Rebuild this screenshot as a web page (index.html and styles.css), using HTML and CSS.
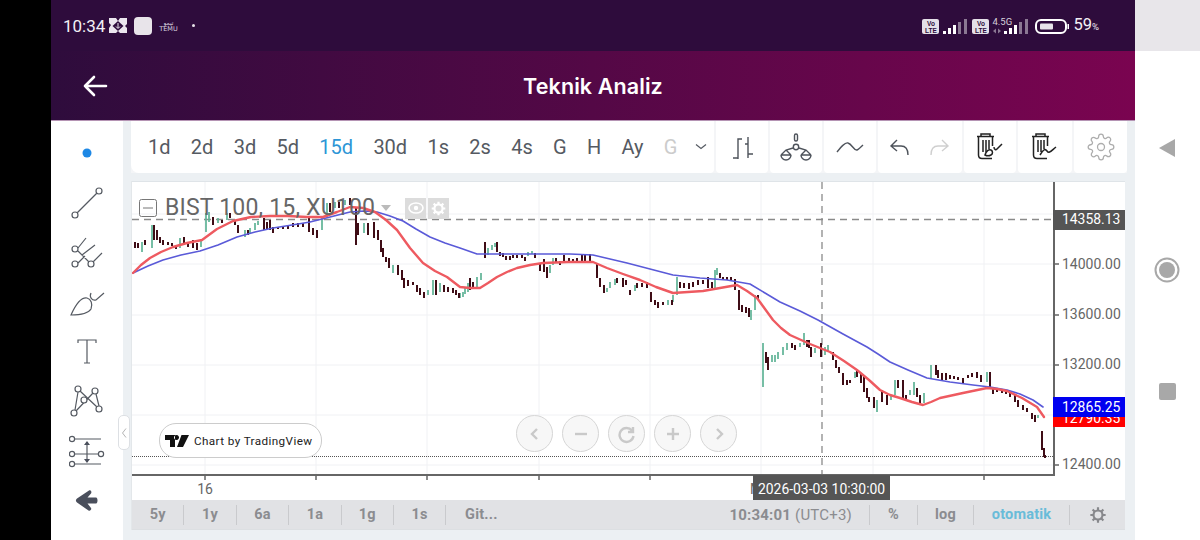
FILE: index.html
```html
<!DOCTYPE html>
<html lang="tr">
<head>
<meta charset="utf-8">
<title>Teknik Analiz</title>
<link rel="stylesheet" href="styles.css">
</head>
<body>
<svg class="defs" width="0" height="0" aria-hidden="true">
  <symbol id="cog" viewBox="0 0 24 24"><path d="M19.4 15a1.65 1.65 0 0 0 .33 1.82l.06.06a2 2 0 0 1 0 2.83 2 2 0 0 1-2.83 0l-.06-.06a1.65 1.65 0 0 0-1.82-.33 1.65 1.65 0 0 0-1 1.51V21a2 2 0 0 1-2 2 2 2 0 0 1-2-2v-.09A1.65 1.65 0 0 0 9 19.4a1.65 1.65 0 0 0-1.82.33l-.06.06a2 2 0 0 1-2.83 0 2 2 0 0 1 0-2.83l.06-.06a1.65 1.65 0 0 0 .33-1.82 1.65 1.65 0 0 0-1.51-1H3a2 2 0 0 1-2-2 2 2 0 0 1 2-2h.09A1.65 1.65 0 0 0 4.6 9a1.65 1.65 0 0 0-.33-1.82l-.06-.06a2 2 0 0 1 0-2.83 2 2 0 0 1 2.83 0l.06.06a1.65 1.65 0 0 0 1.82.33H9a1.65 1.65 0 0 0 1-1.51V3a2 2 0 0 1 2-2 2 2 0 0 1 2 2v.09a1.65 1.65 0 0 0 1 1.51 1.65 1.65 0 0 0 1.82-.33l.06-.06a2 2 0 0 1 2.83 0 2 2 0 0 1 0 2.83l-.06.06a1.65 1.65 0 0 0-.33 1.82V9a1.65 1.65 0 0 0 1.51 1H21a2 2 0 0 1 2 2 2 2 0 0 1-2 2h-.09a1.65 1.65 0 0 0-1.51 1z"/><circle cx="12" cy="12" r="3"/></symbol>
</svg>
<div class="screen">
  <div class="bezel"></div>
  <div class="app">
    <div class="status">
      <div class="status-left">
        <span class="clock">10:34</span>
        <svg class="st-diamond" viewBox="0 0 18 17"><path d="M0 1h7l2 3 2-3h7v6l-2 2 2 2v5h-7l-2-2-2 2H0v-5l2-3-2-2z" fill="#ebe6ee"/><path d="M9 4l5.500 5L9 14 3.500 9z" fill="#2e0c3c"/><path d="M9 6v5M7 9.500L9 11.500l2-2" stroke="#ebe6ee" fill="none"/></svg>
        <span class="st-square"></span>
        <span class="st-temu"><span class="st-temu-top">تيمو</span><span>TEMU</span></span>
        <span class="st-dot"></span>
      </div>
      <div class="status-right">
        <span class="volte">Vo<br>LTE</span>
        <svg class="bars" viewBox="0 0 24 15"><g fill="#fff"><rect x="0" y="12" width="3" height="3"/><rect x="5" y="9" width="3" height="6"/><rect x="10" y="6" width="3" height="9"/></g><g fill="#8b7893"><rect x="15" y="3" width="3" height="12"/><rect x="21" y="0" width="3" height="15"/></g></svg>
        <span class="volte">Vo<br>LTE</span>
        <span class="net">
          <span class="net-label">4.5G</span>
          <svg class="net-bars" viewBox="0 0 36 15"><path d="M1 12l3-2.500v5zM9 12L6 9.500v5z" fill="#8b7893"/><g fill="#fff"><rect x="12" y="12" width="3" height="3"/><rect x="17" y="9" width="3" height="6"/><rect x="22" y="6" width="3" height="9"/></g><g fill="#8b7893"><rect x="27" y="3" width="3" height="12"/><rect x="33" y="0" width="3" height="15"/></g></svg>
        </span>
        <svg class="battery" viewBox="0 0 34 15"><rect x="1" y="1" width="30" height="13" rx="5" fill="none" stroke="#fff" stroke-width="2"/><rect x="5" y="4.500" width="13" height="6" rx="1" fill="#e8e4ea"/><rect x="32.500" y="5" width="1.500" height="5" fill="#fff"/></svg>
        <span class="pct">59<small>%</small></span>
      </div>
    </div>
    <div class="header">
      <svg class="back" viewBox="0 0 26 24"><path d="M24 12H3M12 3l-9 9 9 9" fill="none" stroke="#fff" stroke-width="2.600" stroke-linecap="round" stroke-linejoin="round"/></svg>
      <h1 class="title">Teknik Analiz</h1>
    </div>
    <div class="main">
      <div class="tools">
        <svg class="tool" viewBox="69 135 36 36"><circle cx="87" cy="153" r="4.500" fill="#1e88e5"/></svg>
        <svg class="tool" viewBox="69 185 36 36"><path d="M77 213L97 193"/><circle cx="75" cy="215" r="3"/><circle cx="99" cy="191" r="3"/></svg>
        <svg class="tool" viewBox="69 235 36 36"><path d="M78 248L86 238M82 255L95 245M93 262L102 253M78 251L90 263M78 263L85 256"/><circle cx="75" cy="249" r="3"/><circle cx="75" cy="264" r="3"/><circle cx="91" cy="264" r="3"/></svg>
        <svg class="tool" viewBox="70 285 36 36"><path d="M72 315C76 306 82 297 88 298C92 299 94 304 92 309C89 314 80 315 72 315Z"/><path d="M92 293C90 297 93 301 97 300L105 293"/></svg>
        <svg class="tool" viewBox="70 335 36 36"><path d="M79 343V340H97V343M88 340V363M85 363H91"/></svg>
        <svg class="tool" viewBox="70 385 36 36"><path d="M76 410L79 392M77 411L94 393M81 391L98 407M97 394L100 406"/><circle cx="79" cy="389" r="3"/><circle cx="96" cy="391" r="3"/><circle cx="85" cy="400" r="3"/><circle cx="100" cy="409" r="3"/><circle cx="75" cy="413" r="3"/></svg>
        <svg class="tool" viewBox="70 435 36 36"><path d="M76 439H102M76 454H99M76 464H102M88 442V462"/><path class="solid" d="M88 441l-3 4h6zM88 463l-3-4h6z"/><circle cx="73" cy="439" r="2.600"/><circle cx="73" cy="454" r="2.600"/><circle cx="102" cy="454" r="2.600"/><circle cx="73" cy="464" r="2.600"/></svg>
        <svg class="tool" viewBox="70 485 36 36"><path class="solid" d="M78 498.500L90 490.500C92 489.500 93 492 92 493.500L88.500 497.500H97C99 497.500 99 503.500 97 503.500H88.500L92 508C93 509.500 91 511.500 89.500 510.500L78 502.500C76.500 501.500 76.500 499.500 78 498.500Z"/></svg>
      </div>
      <button class="collapse"><svg viewBox="0 0 6 12"><path d="M5 1.500L1.500 6 5 10.500" fill="none" stroke="#b5b5b5"/></svg></button>
      <div class="content">
        <div class="toolbar">
          <div class="card periods">
            <span class="period">1d</span><span class="period">2d</span><span class="period">3d</span><span class="period">5d</span><span class="period active">15d</span><span class="period">30d</span><span class="period">1s</span><span class="period">2s</span><span class="period">4s</span><span class="period">G</span><span class="period">H</span><span class="period">Ay</span><span class="period muted">G</span>
            <svg class="chev" viewBox="0 0 12 8"><path d="M1 1.500l5 4 5-4" fill="none" stroke="#555a62" stroke-width="1.200"/></svg>
          </div>
          <div class="card w52"><svg class="tb" viewBox="728 132 28 28"><path d="M742 138H738V158M738 157H733M748 136V157M745 143H748M748 153H753"/></svg></div>
          <div class="card w52"><svg class="tb scale" viewBox="780 131 30 30"><rect x="793.500" y="133" width="3" height="7" rx="1.500"/><circle cx="795" cy="146" r="2.700"/><path d="M792 147L785 149L780 154M798 147L805 149L810 154M785 149L790 154M805 149L800 154M780 154H790M800 154H810M780 154A5 5 0 0 0 790 154M800 154A5 5 0 0 0 810 154"/></svg></div>
          <div class="card w52"><svg class="tb" viewBox="836 134 28 28"><path d="M837 153C841 148 845 143 848 144C852 145 854 152 857 151C859 150 861 148 863 146"/></svg></div>
          <div class="card undo">
            <svg class="tb" viewBox="886 132 28 28"><path d="M897 139L891 145L897 150M891 145H901C906 145 908 149 908 154"/></svg>
            <svg class="tb light" viewBox="926 132 28 28"><path d="M942 139L948 145L942 150M948 145H938C933 145 931 149 931 154"/></svg>
          </div>
          <div class="card w52"><svg class="tb dark" viewBox="974 131 32 32"><path d="M977 136.500H994M981 136V134H990V136M978.500 137V155C978.500 157 979.500 158.500 982 158.500H992M992.500 137V146M983 140V152M986 140V152M989 140V149"/><path d="M985 155C986 151 989 149 991 150C993 151 993 154 991 155C989 156 987 156 985 155ZM994 147C994 150 996 150 997 149L1002 144"/></svg></div>
          <div class="card w54"><svg class="tb dark" viewBox="1029 131 32 32"><path d="M1032 136.500H1049M1036 136V134H1045V136M1033.500 137V155C1033.500 157 1034.500 158.500 1037 158.500H1047M1047.500 137V146M1038 140V152M1041 140V152M1044 140V149M1040 155C1043 150 1045 148 1047 151C1049 154 1051 151 1056 147"/></svg></div>
          <div class="card w53"><svg class="gear"><use href="#cog"/></svg></div>
        </div>
        <div class="chart">
          <svg class="plot" viewBox="132 182 993 318">
            <path class="grid" d="M205 182V475M316 182V475M427 182V475M539 182V475M650 182V475M761 182V475M873 182V475M984 182V475M132 214H1054M132 264H1054M132 315H1054M132 365H1054M132 415H1054M132 465H1054"/>
            <path class="dotted" d="M132 456.500H1054"/>
            <path class="cross" d="M132 219.500H1054M822 182V475"/>
            <path class="up" d="M142 242V252M152 225V248M180 238V248M201 240V247M206 213V232M209 212V222M218 218V223M227 213V220M245 230V237M250 228V234M255 223V230M258 221V225M322 217V230M327 203V217M335 202V208M345 200V205M364 223V233M393 265V273M428 290V295M433 280V295M440 283V292M463 292V297M468 283V292M460 293V298M465 288V294M477 277V287M481 273V280M488 248V255M492 245V250M495 243V247M528 252V256M532 251V254M550 265V273M553 258V265M607 288V292M610 282V288M615 279V285M635 285V291M668 300V305M673 295V302M677 277V295M715 270V288M717 268V275M751 310V320M755 295V310M763 343V387M772 355V362M775 355V362M778 352V359M783 347V355M787 343V350M800 343V347M804 333V345M815 348V353M825 347V355M828 345V352M855 372V378M877 400V412M891 395V400M895 380V395M910 390V395M914 382V395M924 393V403M931 365V378M987 372V382M1038 415V418"/>
            <path class="down" d="M135 242V248M138 243V248M145 240V245M154 225V240M157 230V240M160 237V243M163 240V245M168 242V245M172 243V246M176 245V249M184 237V245M188 242V247M193 240V248M197 243V250M213 217V225M222 220V223M230 213V218M235 220V225M238 225V233M248 230V235M264 218V230M267 222V230M270 220V230M273 227V233M278 227V229M283 226V229M288 225V229M293 223V227M298 223V227M303 223V227M309 217V232M313 228V235M317 230V238M330 203V212M339 202V208M350 198V205M356 207V245M358 223V235M368 223V235M374 222V238M378 230V240M381 240V252M383 248V257M386 257V262M389 258V268M398 265V275M402 270V280M404 278V288M408 280V286M413 282V285M417 285V292M420 288V295M424 292V298M436 280V295M444 285V292M448 287V292M453 288V293M456 290V295M459 293V298M470 278V290M473 282V288M485 242V258M497 242V252M500 252V256M503 253V257M506 256V260M510 256V260M513 255V258M517 255V258M522 255V258M525 257V261M535 253V258M540 263V271M544 259V272M547 267V278M556 258V263M560 261V265M564 255V262M569 258V263M573 259V263M577 258V263M582 255V263M585 255V263M590 254V262M597 263V278M600 278V287M604 285V293M617 278V283M623 278V287M626 280V285M630 290V295M637 283V288M642 283V287M647 282V288M651 292V302M655 300V305M658 302V308M663 302V305M672 300V305M680 282V288M684 283V288M689 283V289M693 282V287M698 280V285M703 280V284M708 277V288M712 282V288M720 273V278M723 277V280M727 277V280M731 277V280M735 279V290M739 290V310M742 305V312M746 307V313M749 308V317M758 295V300M766 352V363M768 357V370M792 343V348M795 345V350M807 340V347M809 340V348M811 347V357M821 343V357M833 352V360M836 360V368M839 367V373M843 373V385M847 380V385M850 380V383M857 370V377M861 373V383M864 375V392M867 388V398M869 397V402M874 397V408M882 390V402M887 395V405M898 380V388M903 380V398M906 395V400M917 388V397M920 395V405M936 365V375M938 370V378M942 373V380M946 373V380M950 375V379M954 376V379M958 377V380M963 378V383M968 375V378M972 373V377M977 372V378M981 375V382M990 372V387M993 387V394M997 388V392M1002 389V393M1006 390V394M1010 392V397M1015 395V402M1018 400V407M1023 405V410M1027 408V412M1032 413V419M1035 415V422M1042 431V450M1044 448V457M1045 455V458"/>
            <polyline class="ma blue" points="133,273 148,266 163,260 181,255 200,251 218,245 237,237 255,232 273,228 292,225 310,222 330,217 350,212 364,211 377,212 390,216 403,221 416,229 430,237 445,243 460,248 477,254 510,254 543,254 570,254 593,255 610,259 627,263 650,269 673,275 700,278 727,280 750,284 765,293 780,302 800,311 818,320 843,334 867,347 878,354 890,362 908,370 927,378 950,382 973,385 990,387 1007,390 1020,394 1033,400 1043,407"/>
            <polyline class="ma red" points="133,273 141,265 150,258 161,252 173,247 187,243 202,240 217,229 233,221 251,217 270,216 288,216 307,217 323,217 337,212 350,207 363,208 375,212 386,220 397,230 410,248 423,263 435,271 447,277 460,287 470,288 480,288 488,283 497,277 507,272 517,268 530,265 543,263 568,262 593,262 600,265 607,268 623,274 640,280 656,287 673,293 688,292 703,291 720,288 737,285 747,291 757,298 765,309 773,320 781,328 790,335 810,344 830,352 844,361 857,370 869,380 880,390 890,395 900,398 912,402 923,405 931,402 940,398 963,393 987,388 997,389 1007,391 1022,398 1037,407 1044,417"/>
            <path class="axis" d="M132 475H1055M1054 182V475"/>
            <path class="ticks" d="M205 475V480M316 475V480M427 475V480M539 475V480M650 475V480M761 475V480M873 475V480M984 475V480M1054 264H1059M1054 315H1059M1054 365H1059M1054 415H1059M1054 465H1059"/>
            <g class="prices">
              <text x="1062" y="269">14000.00</text>
              <text x="1062" y="319">13600.00</text>
              <text x="1062" y="369">13200.00</text>
              <text x="1062" y="469">12400.00</text>
            </g>
            <rect x="1053" y="210" width="72" height="20" fill="#555"/>
            <text class="tag" x="1062" y="224">14358.13</text>
            <rect x="1053" y="407" width="72" height="20" fill="#ff0000"/>
            <text class="tag" x="1062" y="423">12790.35</text>
            <rect x="1053" y="397" width="72" height="20" fill="#0000f0"/>
            <text class="tag" x="1062" y="412">12865.25</text>
            <text class="date" x="205" y="494" text-anchor="middle">16</text>
            <text class="date" x="750" y="494">M</text>
            <rect x="753" y="475" width="137" height="25" fill="#555"/>
            <text class="tag" x="758" y="494">2026-03-03 10:30:00</text>
          </svg>
          <div class="legend">
            <svg class="legend-box" viewBox="0 0 18 18"><rect x=".5" y=".5" width="17" height="17" rx="2" fill="none" stroke="#777"/><path d="M4 9h10" stroke="#777"/></svg>
            <span class="legend-text">BIST 100, 15, XU100</span>
            <span class="legend-caret"></span>
            <span class="legend-btn"><svg viewBox="0 0 16 12"><ellipse cx="8" cy="6" rx="7" ry="5" fill="none" stroke="#fff" stroke-width="1.600"/><circle cx="8" cy="6" r="2.200" fill="#fff"/></svg></span>
            <span class="legend-btn"><svg class="legend-cog" viewBox="0 0 20 20"><circle cx="10" cy="10" r="4.800" fill="none" stroke="#fff" stroke-width="2.600"/><path d="M10 2v3.500M10 14.500V18M2 10h3.500M14.500 10H18M4.300 4.300l2.500 2.500M13.200 13.200l2.500 2.500M15.700 4.300l-2.500 2.500M6.800 13.200l-2.500 2.500" stroke="#fff" stroke-width="2.600"/></svg></span>
          </div>
          <div class="tv">
            <svg class="tv-logo" viewBox="0 0 24 12"><path d="M0 0H10V12H5V5H0zM16.500 0H24L18 12H12z M11.500 0a2.500 2.500 0 1 0 .01 0z" fill="#111"/></svg>
            <span>Chart by TradingView</span>
          </div>
          <div class="zoom">
            <span class="zbtn"><svg viewBox="0 0 20 20"><path d="M12 5l-5 5 5 5"/></svg></span>
            <span class="zbtn"><svg viewBox="0 0 20 20"><path d="M4 10h12"/></svg></span>
            <span class="zbtn"><svg viewBox="0 0 20 20"><path d="M15 6.500A7 7 0 1 0 16.500 12M16 3v5h-5"/></svg></span>
            <span class="zbtn"><svg viewBox="0 0 20 20"><path d="M4 10h12M10 4v12"/></svg></span>
            <span class="zbtn"><svg viewBox="0 0 20 20"><path d="M8 5l5 5-5 5"/></svg></span>
          </div>
          <div class="bottom">
            <div class="ranges">
              <span class="range">5y</span><span class="range">1y</span><span class="range">6a</span><span class="range">1a</span><span class="range">1g</span><span class="range">1s</span><span class="range last">Git...</span>
            </div>
            <div class="bottom-right">
              <span class="time"><b>10:34:01</b> (UTC+3)</span>
              <span class="opt pc">%</span>
              <span class="opt lg">log</span>
              <span class="opt auto">otomatik</span>
              <span class="opt set"><svg viewBox="0 0 20 20"><circle cx="10" cy="10" r="5" fill="none" stroke="#87888c" stroke-width="2.400"/><path d="M10 1.500v3.500M10 15v3.500M1.500 10h3.500M15 10h3.500M4 4l2.500 2.500M13.500 13.500L16 16M16 4l-2.500 2.500M6.500 13.500L4 16" stroke="#87888c" stroke-width="2.400"/></svg></span>
            </div>
          </div>
        </div>
      </div>
    </div>
  </div>
  <div class="nav">
    <div class="nav-top"></div>
    <div class="nav-keys">
      <svg class="key-back" viewBox="0 0 16 18"><path d="M0 9L16 0V18Z" fill="#a8a8a8"/></svg>
      <svg class="key-home" viewBox="0 0 26 26"><circle cx="13" cy="13" r="11.500" fill="none" stroke="#a8a8a8" stroke-width="2"/><circle cx="13" cy="13" r="8" fill="#a8a8a8"/></svg>
      <span class="key-recent"></span>
    </div>
  </div>
</div>
</body>
</html>
```

FILE: styles.css
```css
* { box-sizing: border-box; }
html, body { margin: 0; padding: 0; }
body { width: 1200px; height: 540px; overflow: hidden; background: #fff; font-family: Roboto, "Liberation Sans", sans-serif; }
.defs { position: absolute; }
.screen { display: flex; width: 1200px; height: 540px; }
.bezel { width: 51px; background: #000; flex: none; }
.app { width: 1084px; flex: none; display: flex; flex-direction: column; }

.status { height: 51px; flex: none; background: #2e0c3c; display: flex; justify-content: space-between; align-items: center; padding: 0 36px 0 12px; color: #fff; }
.status-left, .status-right { display: flex; align-items: center; }
.status-right { padding-top: 1px; }
.clock { font-size: 17px; line-height: 20px; color: #f3f0f5; width: 46px; }
.st-diamond { width: 18px; height: 17px; }
.st-square { width: 18px; height: 18px; border-radius: 4px; background: #e8e4ea; margin-left: 7px; }
.st-temu { display: flex; flex-direction: column; align-items: center; font-size: 6.500px; line-height: 6px; margin-left: 7px; width: 19px; color: #dcd6e0; font-family: "DejaVu Sans", sans-serif; }
.st-temu-top { font-size: 6px; }
.st-dot { width: 3px; height: 3px; border-radius: 50%; background: #e8e4ea; margin-left: 14px; }
.volte { width: 17px; height: 15px; border-radius: 2px; background: #e4e0e8; color: #2e0c3c; font: 700 6.500px/7px "Liberation Sans", sans-serif; text-align: center; padding-top: 1px; }
.bars { width: 24px; height: 15px; margin: 0 5px 0 4px; }
.net { position: relative; width: 36px; height: 15px; margin-left: 3px; }
.net-label { position: absolute; left: 0; top: -2px; font-size: 9.500px; line-height: 10px; color: #d6d0da; }
.net-bars { width: 36px; height: 15px; display: block; }
.battery { width: 34px; height: 15px; margin-left: 7px; }
.pct { font-size: 16.500px; line-height: 20px; margin-left: 4px; color: #f3f0f5; }
.pct small { font-size: 9.500px; }

.header { height: 70px; flex: none; position: relative; display: flex; align-items: center; justify-content: center; background: linear-gradient(90deg, #2e0c3c 0%, #7a0450 100%); border-bottom: 1px solid #b594b4; }
.back { position: absolute; left: 31px; top: 23px; width: 26px; height: 24px; }
.title { margin: 0; font: 600 21.500px/28px Inter, "Open Sans", sans-serif; color: #fff; letter-spacing: .1px; }

.main { flex: 1; display: flex; position: relative; min-height: 0; }
.tools { width: 72px; flex: none; background: #fff; display: flex; flex-direction: column; align-items: center; padding-top: 14px; gap: 14px; }
.tool { width: 36px; height: 36px; flex: none; fill: #fff; stroke: #555a62; stroke-width: 1.200; }
.tool path { fill: none; }
.tool .solid { fill: #4a4f5c; stroke: none; }
.tool:first-child circle { stroke: none; }
.collapse { position: absolute; left: 67px; top: 294px; width: 12px; height: 35px; padding: 0; background: #fff; border: 1px solid #dde0e4; border-radius: 5px; display: flex; align-items: center; justify-content: center; z-index: 2; }
.collapse svg { width: 6px; height: 12px; }

.content { flex: 1; background: #ecf0f3; padding: 0 8px; display: flex; flex-direction: column; min-width: 0; }
.toolbar { height: 52px; flex: none; display: flex; gap: 2px; background: #f4f5f7; }
.card { background: #fff; border-radius: 0 0 4px 4px; display: flex; align-items: center; justify-content: center; flex: none; }
.periods { width: 583px; justify-content: flex-start; padding-left: 17px; gap: 20.300px; border-bottom-left-radius: 8px; }
.period { font-size: 20px; line-height: 28px; color: #555a62; }
.period.active { color: #2d96d6; }
.period.muted { color: #ccc; }
.chev { width: 12px; height: 8px; margin-left: -3px; }
.w52 { width: 52px; }
.w53 { width: 53px; }
.w54 { width: 54px; }
.undo { width: 84px; gap: 12px; }
.tb { width: 28px; height: 28px; fill: none; stroke: #4e535b; stroke-width: 1.400; overflow: visible; }
.tb.light { stroke: #cfcfcf; }
.tb.dark { width: 32px; height: 32px; stroke: #222; stroke-width: 1.500; }
.tb.scale { width: 30px; height: 30px; }
.gear { width: 28px; height: 28px; fill: none; stroke: #adadad; stroke-width: 1.100; }

.chart { position: relative; margin: 8px 2px 0 1px; height: 349px; background: #fff; border-top: 1px solid #dfe4e8; display: flex; flex-direction: column; box-shadow: -1px 0 0 #e3e7ea; }
.plot { width: 993px; height: 318px; display: block; flex: none; }
.grid { stroke: #f0f1f4; stroke-width: 1; fill: none; }
.dotted { stroke: #555; stroke-width: 1; stroke-dasharray: 1 1; fill: none; }
.cross { stroke: #8a8a8a; stroke-width: 1.300; stroke-dasharray: 7 5; fill: none; }
.up { stroke: #5fb396; stroke-width: 1.700; fill: none; }
.down { stroke: #3f0d16; stroke-width: 2; fill: none; }
.ma { fill: none; stroke-linejoin: round; stroke-linecap: round; }
.ma.blue { stroke: #5a5ad8; stroke-width: 1.600; }
.ma.red { stroke: #ee5a60; stroke-width: 2.400; }
.axis { stroke: #666; stroke-width: 2; fill: none; }
.ticks { stroke: #666; stroke-width: 1.500; fill: none; }
.prices text { font-size: 14px; fill: #666; }
.tag { font-size: 13.900px; fill: #fff; }
.date { font-size: 14px; fill: #666; }

.legend { position: absolute; left: 7px; top: 15px; display: flex; align-items: center; height: 22px; }
.legend-box { width: 18px; height: 18px; }
.legend-text { margin-left: 8px; font-size: 23px; line-height: 26px; color: #666; white-space: nowrap; letter-spacing: .2px; }
.legend-caret { margin-left: 6px; border: 5px solid transparent; border-top: 6px solid #bbb; border-bottom: 0; }
.legend-btn { width: 21px; height: 21px; background: #dcdcdc; display: flex; align-items: center; justify-content: center; margin-left: 2px; }
.legend-caret + .legend-btn { margin-left: 14px; }
.legend-btn svg { width: 16px; height: 12px; }
.legend-btn .legend-cog { width: 17px; height: 17px; }

.tv { position: absolute; left: 27px; top: 241px; width: 163px; height: 35px; border: 1px solid #ccc; border-radius: 17px; background: #fff; display: flex; align-items: center; padding-left: 5px; gap: 5px; font-size: 11.700px; color: #222; letter-spacing: .4px; white-space: nowrap; }
.tv-logo { width: 24px; height: 12px; flex: none; }

.zoom { position: absolute; left: 384px; top: 233px; display: flex; gap: 9px; }
.zbtn { width: 37px; height: 37px; border: 1px solid #d6d6d6; border-radius: 50%; background: #f7f7f7; display: flex; align-items: center; justify-content: center; }
.zbtn svg { width: 20px; height: 20px; fill: none; stroke: #c9c9c9; stroke-width: 2.400; }

.bottom { height: 30px; flex: none; background: #e1e2e5; display: flex; justify-content: space-between; align-items: center; font-size: 14.500px; font-weight: 700; color: #8b8c90; border-bottom: 1px solid #dcdfe2; letter-spacing: .2px; }
.ranges { display: flex; align-items: center; }
.range { width: 52.400px; height: 20px; line-height: 20px; text-align: center; border-right: 1px solid #c9cacd; }
.range.last { border: 0; width: 66px; padding-left: 4px; }
.bottom-right { display: flex; align-items: center; }
.time { margin-right: 17px; font-size: 15px; font-weight: 400; }
.time b { font-weight: 700; }
.opt { height: 20px; line-height: 20px; text-align: center; border-left: 1px solid #c9cacd; display: flex; align-items: center; justify-content: center; }
.pc { width: 48px; }
.lg { width: 56px; }
.auto { width: 96px; color: #69bcd9; }
.set { width: 56px; }
.set svg { width: 18px; height: 18px; }

.nav { flex: 1; display: flex; flex-direction: column; }
.nav-top { height: 51px; background: #e8e6ea; flex: none; }
.nav-keys { flex: 1; background: #fff; display: flex; flex-direction: column; align-items: center; padding-top: 88px; padding-right: 1px; gap: 100px; }
.key-back { width: 16px; height: 18px; flex: none; }
.key-home { width: 26px; height: 26px; flex: none; }
.key-recent { width: 17px; height: 17px; border-radius: 2px; background: #a8a8a8; flex: none; }
```
